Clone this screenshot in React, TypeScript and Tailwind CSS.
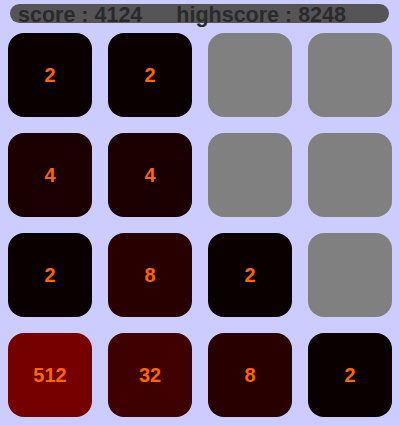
import React from 'react';

type Cell = number | null;

const board: Cell[] = [
  2, 2, null, null,
  4, 4, null, null,
  2, 8, 2, null,
  512, 32, 8, 2,
];

const tileColor = (v: Cell) => {
  switch (v) {
    case 2: return 'bg-[#0a0000]';
    case 4: return 'bg-[#1a0000]';
    case 8: return 'bg-[#280000]';
    case 16: return 'bg-[#330000]';
    case 32: return 'bg-[#3e0000]';
    case 512: return 'bg-[#750000]';
    default: return 'bg-[#808080]';
  }
};

const App: React.FC = () => {
  return (
    <div className="w-[400px] h-[425px] bg-[#ccccff] overflow-hidden font-['Liberation_Sans',Arial,sans-serif]">
      <div className="pt-[4px] pl-[10px]">
        <div className="w-[379px] h-[19px] rounded-full bg-[#555555] flex items-center pl-[8px] text-[21.5px] font-bold text-[#2a2a2a] leading-none whitespace-pre">
          <span className="relative top-[2px]">score : 4124</span>
          <span className="relative top-[2px] ml-[34px]">highscore : 8248</span>
        </div>
      </div>
      <div className="grid grid-cols-[repeat(4,84px)] auto-rows-[84px] gap-x-[16px] gap-y-[16px] pl-[8px] pt-[10px]">
        {board.map((v, i) => (
          <div
            key={i}
            className={`${tileColor(v)} rounded-[16px] flex items-center justify-center text-[20px] font-bold text-[#ff6600]`}
          >
            {v ?? ''}
          </div>
        ))}
      </div>
    </div>
  );
};

export default App;
